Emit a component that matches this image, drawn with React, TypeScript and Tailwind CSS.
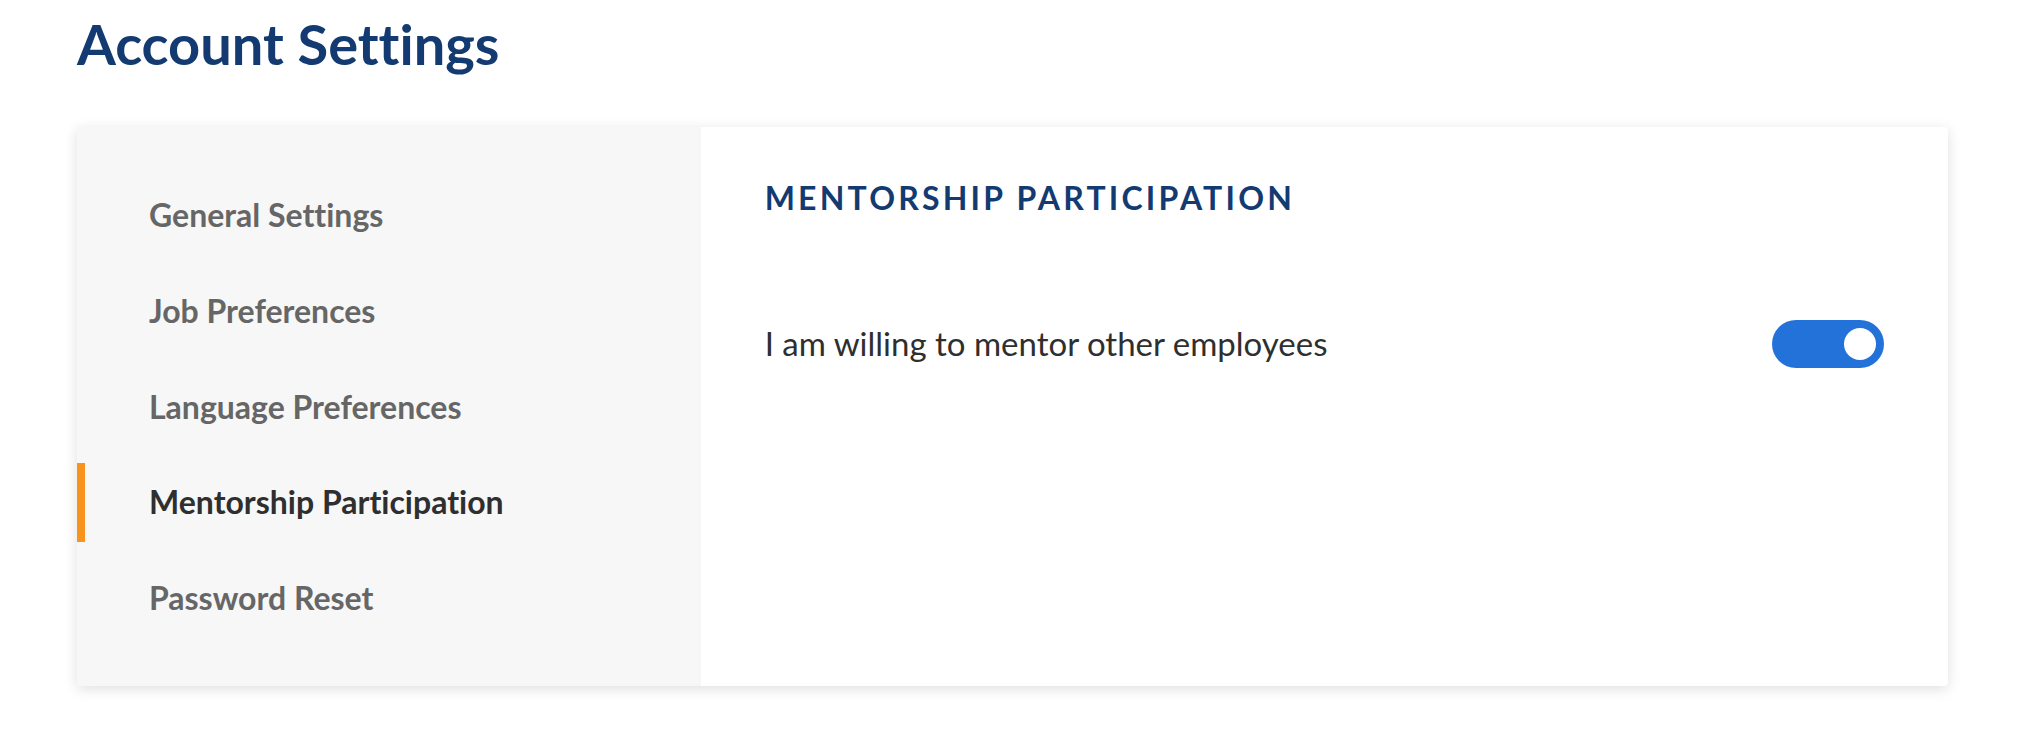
import { useState } from "react";

const sections = [
	"General Settings",
	"Job Preferences",
	"Language Preferences",
	"Mentorship Participation",
	"Password Reset",
];

export default function App() {
	const [active, setActive] = useState("Mentorship Participation");
	const [willing, setWilling] = useState(true);

	return (
		<div className="min-h-screen bg-white px-[77px] font-['Lato','Noto_Sans',sans-serif] [font-variant-ligatures:none]">
			<h1 className="pt-[10px] text-[56px] font-bold leading-[1.2] text-[#133b72]">
				Account Settings
			</h1>

			<div className="mt-[50px] flex h-[559px] overflow-hidden rounded-[4px] bg-white shadow-[0_3px_14px_rgba(0,0,0,0.13)]">
				<nav className="flex w-1/3 flex-col gap-4 bg-[#f7f7f7] py-12">
					{sections.map((s) => (
						<button
							key={s}
							onClick={() => setActive(s)}
							className={
								s === active
									? "flex h-20 items-center border-l-8 border-[#f7941d] pl-[64px] text-left text-[32px] font-bold text-[#2f2f2f]"
									: "flex h-20 items-center border-l-8 border-transparent pl-[64px] text-left text-[32px] font-bold text-[#666666]"
							}>
							{s}
						</button>
					))}
				</nav>

				<div className="flex-1 px-16 pt-[53px]">
					<h2 className="text-[32px] font-bold uppercase leading-[36px] tracking-[0.1em] text-[#133b72]">
						Mentorship Participation
					</h2>

					<div className="mt-[103px] flex items-center justify-between">
						<span className="text-[33px] text-[#2f2f2f]">
							I am willing to mentor other employees
						</span>
						<button
							onClick={() => setWilling(!willing)}
							className={
								willing
									? "flex h-12 w-28 items-center justify-end rounded-full bg-[#2272d9] px-2"
									: "flex h-12 w-28 items-center justify-start rounded-full bg-[#c9c9c9] px-2"
							}>
							<span className="h-8 w-8 rounded-full bg-white" />
						</button>
					</div>
				</div>
			</div>
		</div>
	);
}
